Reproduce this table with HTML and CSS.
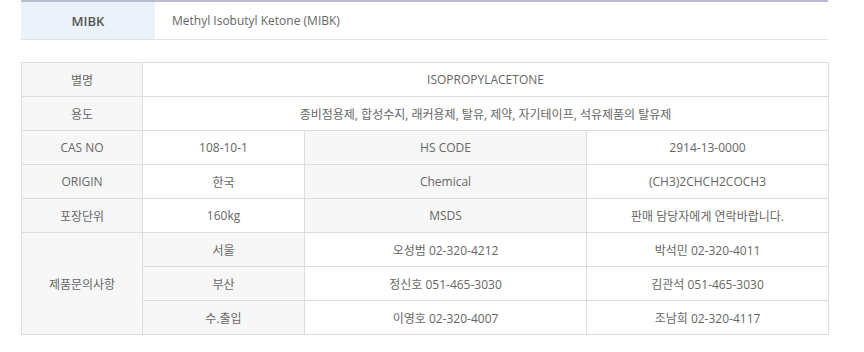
FILE: index.html
```html
<!DOCTYPE html>
<html lang="ko">
<head>
<meta charset="utf-8">
<link rel="stylesheet" href="styles.css">
</head>
<body>
<div class="wrap">
  <div class="title-bar">
    <div class="title-label">MIBK</div>
    <div class="title-value">Methyl Isobutyl Ketone (MIBK)</div>
  </div>
  <table class="spec">
    <colgroup>
      <col class="c1"><col class="c2"><col class="c3"><col class="c4">
    </colgroup>
    <tbody>
      <tr><th>별명</th><td colspan="3">ISOPROPYLACETONE</td></tr>
      <tr><th>용도</th><td colspan="3">종비점용제, 합성수지, 래커용제, 탈유, 제약, 자기테이프, 석유제품의 탈유제</td></tr>
      <tr><th>CAS NO</th><td>108-10-1</td><th>HS CODE</th><td>2914-13-0000</td></tr>
      <tr><th>ORIGIN</th><td>한국</td><th>Chemical</th><td>(CH3)2CHCH2COCH3</td></tr>
      <tr><th>포장단위</th><td>160kg</td><th>MSDS</th><td>판매 담당자에게 연락바랍니다.</td></tr>
      <tr><th rowspan="3">제품문의사항</th><th>서울</th><td>오성범 02-320-4212</td><td>박석민 02-320-4011</td></tr>
      <tr><th>부산</th><td>정신호 051-465-3030</td><td>김관석 051-465-3030</td></tr>
      <tr><th>수.출입</th><td>이영호 02-320-4007</td><td>조남희 02-320-4117</td></tr>
    </tbody>
  </table>
</div>
</body>
</html>
```

FILE: styles.css
```css
html, body {
  margin: 0;
  padding: 0;
  background: #fff;
}
body {
  font-family: "Open Sans", "Noto Sans CJK KR", sans-serif;
  font-size: 12px;
  color: #666;
}
.wrap {
  width: 807px;
  padding-left: 21px;
}
.title-bar {
  display: flex;
  height: 37px;
  border-top: 2px solid #b9bdcf;
  border-bottom: 1px solid #e2e2e2;
}
.title-label {
  width: 134px;
  background: #ebf2fa;
  display: flex;
  align-items: center;
  justify-content: center;
  font-size: 13px;
  font-weight: 600;
  color: #555;
}
.title-value {
  display: flex;
  align-items: center;
  padding-left: 17px;
  font-size: 12px;
  color: #666;
}
.spec {
  margin-top: 22px;
  width: 807px;
  border-collapse: collapse;
  table-layout: fixed;
}
.c1 { width: 121px; }
.c2 { width: 162px; }
.c3 { width: 282px; }
.c4 { width: 242px; }
.spec th, .spec td {
  border: 1px solid #dddddd;
  height: 34px;
  padding: 0;
  text-align: center;
  vertical-align: middle;
  font-weight: normal;
  font-size: 12px;
  color: #666;
  box-sizing: border-box;
}
.spec th {
  background: #f7f7f7;
}
.spec td {
  background: #fff;
}
```
